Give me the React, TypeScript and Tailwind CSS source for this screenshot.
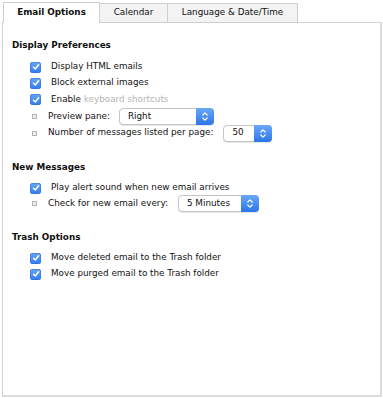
import React from 'react';

function Check() {
  return (
    <span className="flex h-[11px] w-[11px] shrink-0 items-center justify-center rounded-[3px] bg-gradient-to-b from-[#6aa8f7] to-[#2f7bed] shadow-[inset_0_0_0_0.5px_#2a6fd6]">
      <svg width="8" height="8" viewBox="0 0 8 8" fill="none" stroke="white" strokeWidth="1.5" strokeLinecap="round" strokeLinejoin="round">
        <path d="M1.5 4.2 L3.3 6 L6.6 1.8" />
      </svg>
    </span>
  );
}

function Bullet() {
  return <span className="h-[5px] w-[5px] shrink-0 border border-[#b5b5b5] bg-[#ececec]" />;
}

function Select({ value, width }: { value: string; width: string }) {
  return (
    <span className={`flex h-[17px] items-center rounded-[4px] border border-[#c4c4c4] bg-white shadow-[0_1px_0_#e6e6e6] ${width}`}>
      <span className="flex-1 pl-[8px] text-[#111]">{value}</span>
      <span className="-my-px -mr-px flex h-[17px] w-[18px] items-center justify-center rounded-r-[4px] bg-gradient-to-b from-[#6aa8f7] to-[#2a74ea]">
        <svg width="8" height="11" viewBox="0 0 8 11" fill="none" stroke="white" strokeWidth="1.2" strokeLinecap="round" strokeLinejoin="round">
          <path d="M1.8 4 L4 1.8 L6.2 4" />
          <path d="M1.8 7 L4 9.2 L6.2 7" />
        </svg>
      </span>
    </span>
  );
}

function CheckRow({ children, h = 'h-[16px]' }: { children: React.ReactNode; h?: string }) {
  return (
    <div className={`flex items-center ${h} pl-[27px]`}>
      <Check />
      <span className="ml-[10px]">{children}</span>
    </div>
  );
}

function BulletRow({ children, h = 'h-[16px]' }: { children: React.ReactNode; h?: string }) {
  return (
    <div className={`flex items-center ${h} pl-[29px]`}>
      <Bullet />
      <span className="ml-[11px] flex items-center">{children}</span>
    </div>
  );
}

function Heading({ children, mt }: { children: React.ReactNode; mt: string }) {
  return <div className={`flex h-[14px] items-center pl-[9px] font-bold ${mt}`}>{children}</div>;
}

export default function App() {
  return (
    <div
      className="h-[398px] w-[383px] bg-white text-[8.8px] text-[#111]"
      style={{ fontFamily: '"DejaVu Sans", Verdana, sans-serif' }}
    >
      <div className="flex pl-[3px] pt-[2px]">
        <div className="relative z-10 flex h-[21px] w-[97px] items-center justify-center border border-b-0 border-[#cfcfcf] bg-white font-bold">
          Email Options
        </div>
        <div className="mt-px flex h-[20px] w-[68px] items-center justify-center border border-l-0 border-[#cfcfcf] bg-[#f3f3f3]">
          Calendar
        </div>
        <div className="mt-px flex h-[20px] w-[130px] items-center justify-center border border-l-0 border-[#cfcfcf] bg-[#f3f3f3]">
          Language &amp; Date/Time
        </div>
      </div>
      <div className="-mt-px ml-[2px] h-[375px] w-[380px] border border-r-2 border-b-2 border-[#d3d3d3] border-r-[#dcdcdc] border-b-[#dcdcdc] bg-white">
        <Heading mt="mt-[16px]">Display Preferences</Heading>
        <div className="h-[6px]" />
        <CheckRow>Display HTML emails</CheckRow>
        <CheckRow>Block external images</CheckRow>
        <CheckRow h="h-[17px]">
          Enable <span className="text-[#b4b4b4]">keyboard shortcuts</span>
        </CheckRow>
        <BulletRow h="h-[17px]">
          Preview pane:
          <span className="ml-[9px]">
            <Select value="Right" width="w-[95px]" />
          </span>
        </BulletRow>
        <BulletRow>
          Number of messages listed per page:
          <span className="ml-[10px]">
            <Select value="50" width="w-[49px]" />
          </span>
        </BulletRow>

        <Heading mt="mt-[20px]">New Messages</Heading>
        <div className="h-[5px]" />
        <CheckRow>Play alert sound when new email arrives</CheckRow>
        <BulletRow h="h-[15px]">
          Check for new email every:
          <span className="ml-[10px]">
            <Select value="5 Minutes" width="w-[81px]" />
          </span>
        </BulletRow>

        <Heading mt="mt-[20px]">Trash Options</Heading>
        <div className="h-[5px]" />
        <CheckRow>Move deleted email to the Trash folder</CheckRow>
        <CheckRow>Move purged email to the Trash folder</CheckRow>
      </div>
    </div>
  );
}
